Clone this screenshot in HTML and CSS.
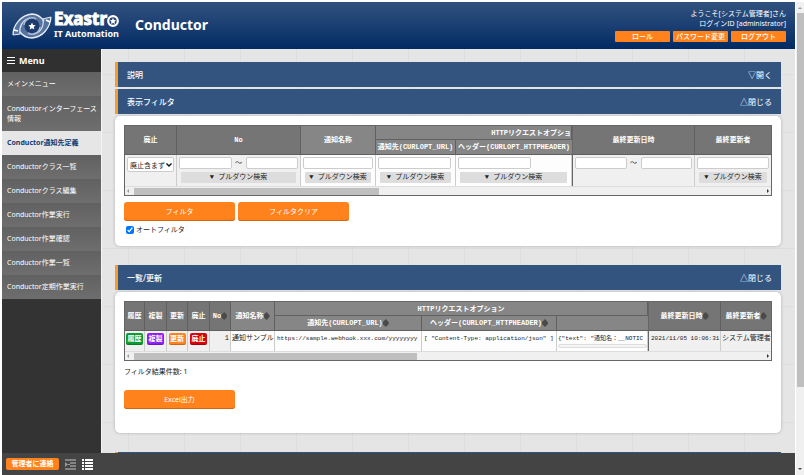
FILE: index.html
```html
<!DOCTYPE html>
<html lang="ja">
<head>
<meta charset="utf-8">
<title>Conductor通知先定義</title>
<link rel="stylesheet" href="styles.css">
</head>
<body>
<div class="window">
  <div class="app">
    <header class="header">
      <div class="logo">
        <svg class="logo-mark" viewBox="0 0 40 30" aria-hidden="true">
          <path d="M1 24C1 14 9 4 20 3c5 0 8 2 11 5l8-2C38 17 31 26 20 27c-5 0-8-1-11-4z" fill="#56749f"/>
          <path d="M1 24C1 14 9 4 20 3c6 0 9 3 12 7" fill="none" stroke="#e8eef6" stroke-width="1.300"/>
          <path d="M39 6C38 17 31 26 20 27c-6 0-9-2-12-6" fill="none" stroke="#e8eef6" stroke-width="1.300"/>
          <path d="M1 24l7-1C7 16 10 9 18 7M39 6l-8 2c1 7-2 13-9 15" fill="none" stroke="#dbe4f0" stroke-width="1.200"/>
          <circle cx="20" cy="15" r="7.500" fill="#1d3c6d"/>
          <path d="M12 14a8 8 0 0 1 12-6M28 16a8 8 0 0 1-12 6" fill="none" stroke="#a9bbd5" stroke-width="1.500"/>
          <path d="M20 11.500l1.100 2.400 2.600.300-1.900 1.800.500 2.600-2.300-1.300-2.300 1.300.500-2.600-1.900-1.800 2.600-.300z" fill="#fff"/>
          <path d="M2 19l4 1M34 9l4 2" stroke="#fff" stroke-width="1.500"/>
        </svg>
        <div class="logo-text">
          <div class="logo-name">Exastr<svg class="logo-o" viewBox="0 0 12 12" aria-label="o"><circle cx="6" cy="6" r="4.800" fill="none" stroke="#fff" stroke-width="2.200"/><path d="M6 2.800l1 2.100 2.200.300-1.600 1.600.400 2.300-2-1.100-2 1.100.400-2.300-1.600-1.600 2.200-.300z" fill="#fff"/></svg></div>
          <div class="logo-sub">IT Automation</div>
        </div>
      </div>
      <h1 class="title">Conductor</h1>
      <div class="user">
        <div>ようこそ[システム管理者]さん</div>
        <div>ログインID [administrator]</div>
        <div class="user-buttons">
          <button>ロール</button><button>パスワード変更</button><button>ログアウト</button>
        </div>
      </div>
    </header>
    <div class="body">
      <nav class="sidebar">
        <h2 class="menu-title"><svg class="burger" viewBox="0 0 8 8" aria-hidden="true"><path d="M0 .500h8M0 3.500h8M0 6.500h8" stroke="#fff" stroke-width="1"/></svg>Menu</h2>
        <a href="#">メインメニュー</a>
        <a href="#" class="tall">Conductorインターフェース情報</a>
        <a href="#" class="current">Conductor通知先定義</a>
        <a href="#">Conductorクラス一覧</a>
        <a href="#">Conductorクラス編集</a>
        <a href="#">Conductor作業実行</a>
        <a href="#">Conductor作業確認</a>
        <a href="#">Conductor作業一覧</a>
        <a href="#">Conductor定期作業実行</a>
      </nav>
      <main class="main">
        <div class="bar"><h2>説明</h2><button>▽開く</button></div>
        <div class="bar"><h2>表示フィルタ</h2><button>△閉じる</button></div>
        <section class="panel filter-panel">
          <div class="frame">
            <table class="filter">
              <colgroup><col class="f-abolish"><col class="f-no"><col class="f-name"><col class="f-url"><col><col class="f-date"><col class="f-user"></colgroup>
              <thead>
                <tr><th rowspan="2">廃止</th><th rowspan="2">No</th><th rowspan="2" class="loose">通知名称</th><th colspan="2" class="loose group cut">HTTPリクエストオプショ</th><th rowspan="2" class="pinned">最終更新日時</th><th rowspan="2">最終更新者</th></tr>
                <tr><th class="loose sub">通知先(CURLOPT_URL)</th><th class="loose sub">ヘッダー(CURLOPT_HTTPHEADER)</th></tr>
              </thead>
              <tbody>
                <tr>
                  <td><div class="select"><select aria-label="廃止"><option>廃止含まず</option></select><svg viewBox="0 0 6 4" aria-hidden="true"><path d="M.500.500L3 3 5.500.500" fill="none" stroke="#111" stroke-width="1.400"/></svg></div></td>
                  <td><div class="range"><input type="text" aria-label="No 開始"><span>～</span><input type="text" aria-label="No 終了"></div><button class="pull">▼ プルダウン検索</button></td>
                  <td class="loose"><input type="text" aria-label="通知名称"><button class="pull">▼ プルダウン検索</button></td>
                  <td class="loose"><input type="text" class="short" aria-label="通知先"><button class="pull">▼ プルダウン検索</button></td>
                  <td class="loose"><input type="text" class="short" aria-label="ヘッダー"><button class="pull">▼ プルダウン検索</button></td>
                  <td class="pinned"><div class="range"><input type="text" aria-label="最終更新日時 開始"><span>～</span><input type="text" aria-label="最終更新日時 終了"></div></td>
                  <td><input type="text" aria-label="最終更新者"><button class="pull">▼ プルダウン検索</button></td>
                </tr>
              </tbody>
            </table>
            <div class="hscroll"><i class="arrow left"></i><div class="track"><div class="thumb filter-thumb"></div></div><i class="arrow right"></i></div>
          </div>
          <div class="actions"><button class="action">フィルタ</button><button class="action">フィルタクリア</button></div>
          <label class="auto"><input type="checkbox" checked>オートフィルタ</label>
        </section>
        <div class="bar"><h2>一覧/更新</h2><button>△閉じる</button></div>
        <section class="panel list-panel">
          <div class="frame">
            <table class="list">
              <colgroup><col class="l-history"><col class="l-copy"><col class="l-update"><col class="l-copy"><col class="l-update"><col class="l-name"><col class="l-url"><col class="l-head"><col><col class="l-date"><col class="l-user"></colgroup>
              <thead>
                <tr><th rowspan="2">履歴</th><th rowspan="2">複製</th><th rowspan="2">更新</th><th rowspan="2">廃止</th><th rowspan="2">No<i class="sort"></i></th><th rowspan="2" class="loose">通知名称<i class="sort"></i></th><th colspan="3" class="loose group">HTTPリクエストオプション</th><th rowspan="2" class="pinned">最終更新日時<i class="sort"></i></th><th rowspan="2">最終更新者<i class="sort"></i></th></tr>
                <tr><th class="loose sub">通知先(CURLOPT_URL)<i class="sort"></i></th><th class="loose sub">ヘッダー(CURLOPT_HTTPHEADER)<i class="sort"></i></th><th class="loose sub"></th></tr>
              </thead>
              <tbody>
                <tr>
                  <td><button class="tag green">履歴</button></td>
                  <td><button class="tag purple">複製</button></td>
                  <td><button class="tag orange">更新</button></td>
                  <td><button class="tag red">廃止</button></td>
                  <td class="num">1</td>
                  <td class="loose">通知サンプル</td>
                  <td class="loose code">https://sample.webhook.xxx.com/yyyyyyyy</td>
                  <td class="loose code">[ "Content-Type: application/json" ]</td>
                  <td class="loose code payload"><div class="json">{"text": "通知名：__NOTIC</div><div class="mini-scroll"></div></td>
                  <td class="pinned code">2021/11/05 10:06:31</td>
                  <td>システム管理者</td>
                </tr>
              </tbody>
            </table>
            <div class="hscroll"><i class="arrow left"></i><div class="track"><div class="thumb list-thumb"></div></div><i class="arrow right"></i></div>
          </div>
          <p class="count">フィルタ結果件数: 1</p>
          <button class="action">Excel出力</button>
        </section>
        <div class="bar"></div>
      </main>
    </div>
    <footer class="footer">
      <button class="contact">管理者に連絡</button>
      <svg class="foot-icon" viewBox="0 0 11 11" aria-hidden="true"><path d="M0 1h11M5 4h6M5 7h6M0 10h11" stroke="#999" stroke-width="1.500"/><path d="M0 3l3 2.500L0 8z" fill="#999"/><path d="M3 5.500h2" stroke="#999"/></svg>
      <svg class="foot-icon" viewBox="0 0 11 11" aria-hidden="true"><path d="M0 1h2M3 1h8M0 4h2M3 4h8M0 7h2M3 7h8M0 10h2M3 10h8" stroke="#fff" stroke-width="2"/></svg>
    </footer>
  </div>
  <div class="vscroll"><i class="arrow up"></i><div class="vtrack"><div class="vthumb"></div></div><i class="arrow down"></i></div>
</div>
</body>
</html>
```
FILE: styles.css
```css
* { box-sizing: border-box; }
body {
  margin: 0;
  background: #fff;
  color: #222;
  font: 7px/10px "Noto Sans", "Noto Sans CJK JP", sans-serif;
}
h1, h2, p { margin: 0; }
button, input, select { font: inherit; margin: 0; padding: 0; }
button { border: 0; cursor: pointer; white-space: nowrap; }

.window { display: flex; height: 100vh; padding: 2px 0 0 2px; overflow: hidden; }
.app { flex: 1; min-width: 0; display: flex; flex-direction: column; }

.header {
  flex: none;
  display: flex;
  height: 47px;
  padding: 0 9px 0 10px;
  background: linear-gradient(#31527f, #1b3f73 50%, #012a63);
  color: #fff;
}
.logo { display: flex; align-items: flex-start; width: 123px; padding-top: 9px; }
.logo-mark { width: 40px; height: 30px; flex: none; }
.logo-text { padding-left: 2px; white-space: nowrap; }
.logo-name { display: flex; align-items: center; height: 16px; font: bold 17px/16px "Open Sans", sans-serif; -webkit-text-stroke: 1px #fff; }
.logo-o { width: 12px; height: 12px; margin-top: 3px; }
.logo-sub { font: bold 9px/13px "Noto Sans", sans-serif; }
.title { font-size: 14px; line-height: 46px; }
.user { margin-left: auto; padding-top: 7px; text-align: right; }
.user-buttons { display: flex; gap: 3px; padding-top: 2px; justify-content: flex-end; }
.user-buttons button { width: 55px; height: 11px; line-height: 11px; background: #ff821c; color: #fff; border-radius: 1px; font-weight: 500; }

.body { flex: 1; min-height: 0; display: flex; }
.sidebar { width: 100px; flex: none; background: #333; border-right: 1px solid #f4f4f4; }
.menu-title { display: flex; align-items: center; gap: 4px; height: 23px; padding-left: 5px; background: #303030; color: #fff; font-size: 9px; }
.burger { width: 8px; height: 8px; }
.sidebar a {
  display: flex;
  align-items: center;
  height: 24px;
  padding-left: 5px;
  background: linear-gradient(#616161, #6e6e6e);
  color: #fff;
  text-decoration: none;
}
.sidebar a.tall { height: 35px; }
.sidebar a.current { background: #e6e6e6; color: #143a70; font-weight: bold; }

.main {
  flex: 1;
  min-width: 0;
  overflow: hidden;
  padding: 13px 14px 0 13px;
  background-color: #e5e5e5;
  background-image: linear-gradient(#dedede 1px, transparent 1px), linear-gradient(90deg, #dedede 1px, transparent 1px);
  background-size: 56px 58px;
  background-position: 26px 25px;
}
.bar {
  display: flex;
  align-items: center;
  justify-content: space-between;
  height: 25px;
  margin-bottom: 2px;
  padding: 0 9px;
  background: #32547f;
  border-left: 3px solid #f99b24;
  color: #fff;
}
.bar h2 { font-size: 8px; font-weight: 500; }
.bar button { background: none; color: #fff; font-size: 8px; }
.panel { padding: 9px; background: #fff; border-radius: 5px; box-shadow: 0 0 3px #aaa; }
.filter-panel { height: 130px; margin-bottom: 19px; }
.list-panel { height: 141px; margin-bottom: 19px; }

.frame { border: 1px solid #666; }
table { width: 100%; table-layout: fixed; border-collapse: separate; border-spacing: 0; font: 7px/8px "Liberation Mono", "Noto Sans CJK JP", monospace; }
th { height: 14px; padding: 0; background: #757575; color: #fff; border-right: 1px solid #606060; border-bottom: 1px solid #606060; white-space: nowrap; font-weight: bold; }
th.loose { background: #868686; }
th.sub { height: 15px; }
td { padding: 2px; vertical-align: top; background: #f0f0f0; border-right: 1px solid #ccc; white-space: nowrap; overflow: hidden; }
td.loose { background: #fdfdfd; }
.pinned { border-left: 1px solid #666; }
tr > :last-child { border-right: 0; }
.f-abolish { width: 52px; }
.f-no { width: 124px; }
.f-name { width: 75px; }
.f-url { width: 80px; }
.f-date { width: 123px; }
.f-user { width: 76px; }
th.cut { text-align: right; }
.filter td { height: 31px; padding: 2px; }
.filter td input { display: block; width: 100%; height: 12px; border: 1px solid #ccc; border-radius: 2px; background: #fff; }
.filter td input.short { width: 73px; max-width: 100%; }
.range { display: flex; align-items: center; }
.range input { flex: 1; min-width: 0; }
.range span { width: 14px; text-align: center; }
.select { display: grid; align-items: center; }
.select > * { grid-area: 1 / 1; }
.select svg { width: 6px; height: 4px; justify-self: end; margin-right: 2px; pointer-events: none; }
.filter select { appearance: none; width: 100%; height: 15px; padding-left: 2px; border: 1px solid #ccc; border-radius: 2px; background: #fff; color: #222; font-family: "Noto Sans CJK JP", sans-serif; }
.pull { display: block; width: calc(100% - 4px); height: 11px; margin: 3px 2px 0; background: #ddd; color: #222; border-radius: 1px; line-height: 11px; }

.hscroll { display: flex; align-items: center; height: 9px; background: #f0f0f0; border-top: 1px solid #ddd; }
.track { flex: 1; margin: 0 5px; height: 7px; }
.thumb { height: 100%; background: #bfbfbf; }
.filter-thumb { width: 39%; }
.list-thumb { width: 45%; }
.arrow { border: 2px solid transparent; width: 0; height: 0; }
.arrow.left { border-right-color: #999; }
.arrow.right { border-left-color: #333; }
.arrow.up { border-bottom-color: #999; }
.arrow.down { border-top-color: #444; }

.actions { display: flex; gap: 3px; margin-top: 6px; }
.action { width: 111px; height: 19px; background: #ff821c; color: #fff; border-radius: 3px; box-shadow: inset 0 -1px #d26510; }
.auto { display: flex; align-items: center; gap: 2px; margin: 4px 0 0 2px; }
.auto input { width: 8px; height: 8px; }

.l-history { width: 20px; }
.l-copy { width: 22px; }
.l-update { width: 21px; }
.l-name { width: 44px; }
.l-url { width: 147px; }
.l-head { width: 135px; }
.l-date { width: 73px; }
.l-user { width: 50px; }
.list td { height: 20px; padding: 2px 1px; line-height: 11px; }
.list td.num { text-align: right; }
.list td.code { font-size: 6px; padding-left: 2px; }
.list td.payload { padding-left: 1px; padding-right: 0; }
.json { overflow: hidden; }
.mini-scroll { height: 4px; background: #f4f4f4; border: 1px solid #ddd; border-radius: 2px; }
.tag { display: block; width: 17px; height: 12px; margin: 0 auto; color: #fff; border-radius: 2px; line-height: 11px; font-weight: bold; box-shadow: inset 0 -1px rgba(0, 0, 0, .2); }
.green { background: #0b9b32; }
.purple { background: #8a1cf5; }
.orange { background: #ff821c; }
.red { background: #d9000d; }
.sort { display: inline-block; width: 6px; height: 8px; vertical-align: middle; background: #4a4a4a; clip-path: polygon(50% 0, 100% 40%, 100% 60%, 50% 100%, 0 60%, 0 40%); }
.count { margin: 6px 0 13px; }

.footer { flex: none; display: flex; align-items: center; gap: 6px; height: 22px; padding: 0 4px; background: #444; }
.contact { width: 53px; height: 12px; background: #ff821c; color: #fff; border-radius: 2px; font-weight: bold; }
.foot-icon { width: 11px; height: 11px; }

.vscroll { width: 9px; flex: none; display: flex; flex-direction: column; align-items: center; padding: 3px 0; background: #f0f0f0; border-left: 1px solid #fff; }
.vtrack { flex: 1; width: 7px; margin: 4px 0; }
.vthumb { height: 83%; background: #bfbfbf; }
```
